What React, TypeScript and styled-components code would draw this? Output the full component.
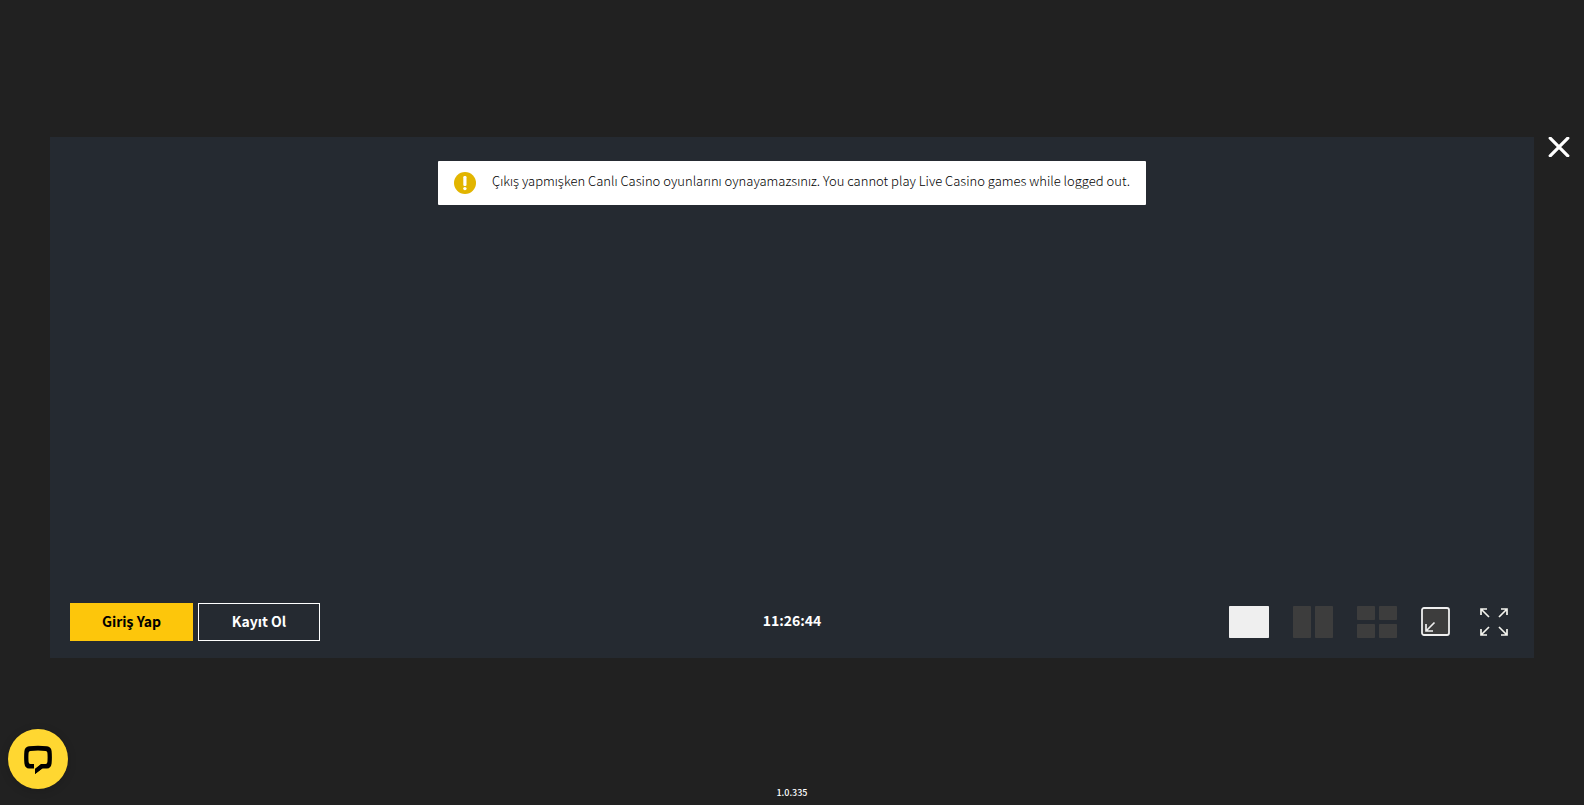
import React from "react";
import styled, { createGlobalStyle } from "styled-components";

const GlobalStyle = createGlobalStyle`
  *, *::before, *::after { box-sizing: border-box; }
  body {
    margin: 0;
    background: #212121;
    color: #fff;
    font-family: "Noto Sans CJK SC", "Noto Sans", sans-serif;
  }
`;

const Page = styled.div`
  display: grid;
  grid-template-columns: 50px minmax(0, 1fr) 50px;
  grid-template-rows: 137px minmax(0, 1fr) 147px;
  min-height: 100vh;
`;

const Panel = styled.main`
  grid-area: 2 / 2;
  display: flex;
  flex-direction: column;
  justify-content: space-between;
  padding: 24px 20px 17px;
  background: #252a31;
`;

const PlainButton = styled.button`
  display: flex;
  padding: 0;
  border: 0;
  background: none;
  color: inherit;
  cursor: pointer;
`;

const CloseButton = styled(PlainButton)`
  grid-area: 2 / 3;
  place-self: start center;
`;

const Alert = styled.div`
  align-self: center;
  display: flex;
  align-items: center;
  gap: 16px;
  min-height: 44px;
  padding: 0 16px;
  border-radius: 1px;
  background: #fff;
  color: #000;
`;

const AlertText = styled.p`
  margin: 0;
  padding-bottom: 4px;
  font-size: 13px;
  font-weight: 300;
  line-height: 20px;
`;

const Toolbar = styled.div`
  display: grid;
  grid-template-columns: 1fr auto 1fr;
  align-items: center;
`;

const Account = styled.div`
  display: flex;
  gap: 5px;
`;

const AccountButton = styled.button<{ $primary?: boolean }>`
  width: ${(p) => (p.$primary ? 123 : 122)}px;
  height: 38px;
  padding: 0 0 2px;
  border: 1px solid ${(p) => (p.$primary ? "#fdc60b" : "#fff")};
  background: ${(p) => (p.$primary ? "#fdc60b" : "transparent")};
  color: ${(p) => (p.$primary ? "#000" : "#fff")};
  font-family: inherit;
  font-size: 14px;
  font-weight: 700;
  line-height: 20px;
  cursor: pointer;
`;

const Clock = styled.time`
  padding-bottom: 4px;
  font-size: 14px;
  font-weight: 700;
  line-height: 20px;
`;

const Views = styled.div`
  display: flex;
  justify-content: flex-end;
  align-items: center;
  gap: 24px;
  padding-right: 6px;
`;

const FullscreenButton = styled(PlainButton)`
  margin-left: 6px;
`;

const Footer = styled.footer`
  grid-area: 3 / 2;
  align-self: end;
  padding-bottom: 4px;
  text-align: center;
  font-size: 9px;
  font-weight: 500;
  line-height: 16px;
`;

const ChatButton = styled(PlainButton)`
  position: fixed;
  left: 8px;
  bottom: 16px;
  width: 60px;
  height: 60px;
  align-items: center;
  justify-content: center;
  border-radius: 50%;
  background: #ffd731;
  box-shadow: 0 2px 10px rgba(0, 0, 0, 0.15);
`;

const viewTiles: { label: string; color: string; tiles: number[][] }[] = [
  { label: "Single view", color: "#efefef", tiles: [[0, 0, 40, 32]] },
  { label: "Two games", color: "#3d3d3d", tiles: [[0, 0, 18, 32], [22, 0, 18, 32]] },
  {
    label: "Four games",
    color: "#3d3d3d",
    tiles: [[0, 0, 18, 14], [22, 0, 18, 14], [0, 18, 18, 14], [22, 18, 18, 14]],
  },
];

export default function App() {
  return (
    <>
      <GlobalStyle />
      <Page>
        <Panel>
          <Alert role="alert">
            <svg width="22" height="22" viewBox="0 0 22 22" aria-hidden="true">
              <circle cx="11" cy="11" r="11" fill="#e2b500" />
              <rect x="9.3" y="4" width="3.2" height="10" rx="1.2" fill="#fff" />
              <circle cx="10.9" cy="16.6" r="1.7" fill="#fff" />
            </svg>
            <AlertText>
              Çıkış yapmışken Canlı Casino oyunlarını oynayamazsınız. You cannot play Live Casino
              games while logged out.
            </AlertText>
          </Alert>
          <Toolbar>
            <Account>
              <AccountButton $primary>Giriş Yap</AccountButton>
              <AccountButton>Kayıt Ol</AccountButton>
            </Account>
            <Clock>11:26:44</Clock>
            <Views>
              {viewTiles.map((view) => (
                <PlainButton key={view.label} aria-label={view.label}>
                  <svg width="40" height="32" fill={view.color}>
                    {view.tiles.map(([x, y, w, h]) => (
                      <rect key={`${x}-${y}`} x={x} y={y} width={w} height={h} rx="0.7" />
                    ))}
                  </svg>
                </PlainButton>
              ))}
              <PlainButton aria-label="Minimize">
                <svg width="29" height="30" fill="none" stroke="#efefef">
                  <rect x="1" y="1" width="27" height="27" rx="2" fill="#3d3d3d" strokeWidth="1.8" />
                  <path d="M13.5 15.5L5.5 23.5M5 17v7h7" strokeWidth="1.7" />
                </svg>
              </PlainButton>
              <FullscreenButton aria-label="Full screen">
                <svg width="28" height="28" fill="none" stroke="#f4f4ee" strokeWidth="1.7">
                  <path d="M1 7V1h6M1 1l8 8M21 1h6v6M27 1l-8 8M1 21v6h6M1 27l8-8M21 27h6v-6M27 27l-8-8" />
                </svg>
              </FullscreenButton>
            </Views>
          </Toolbar>
        </Panel>
        <CloseButton aria-label="Close">
          <svg width="22" height="20" viewBox="0 0 22 20" stroke="#fff" strokeWidth="3.2" strokeLinecap="round">
            <path d="M2.2 1.2l17.6 17.6M19.8 1.2L2.2 18.8" />
          </svg>
        </CloseButton>
        <Footer>1.0.335</Footer>
      </Page>
      <ChatButton aria-label="Chat">
        <svg width="28" height="30" viewBox="0 0 28 30" aria-hidden="true">
          <path
            d="M5 2.3Q14 1.4 23 2.3Q27 2.8 27.6 7Q28.2 13.3 27.6 19.5Q27 24.2 23 24.6H18.2L11 30V20H21.6Q23.2 19.8 23.4 18Q23.8 13.3 23.4 8.8Q23.2 7.1 21.6 6.9Q14 6.2 6.4 6.9Q4.8 7.1 4.6 8.8Q4.2 13.3 4.6 18Q4.8 19.8 6.4 20H10V24.6H5Q1 24.2 .4 19.5Q-.2 13.3 .4 7Q1 2.8 5 2.3Z"
            fill="#000"
          />
          <path d="M10.6 19.4V25.2L17 20.4V19.4Z" fill="#ffd731" />
          <path d="M11 30V25L17 20H22L18.2 24.6Z" fill="#000" />
        </svg>
      </ChatButton>
    </>
  );
}
